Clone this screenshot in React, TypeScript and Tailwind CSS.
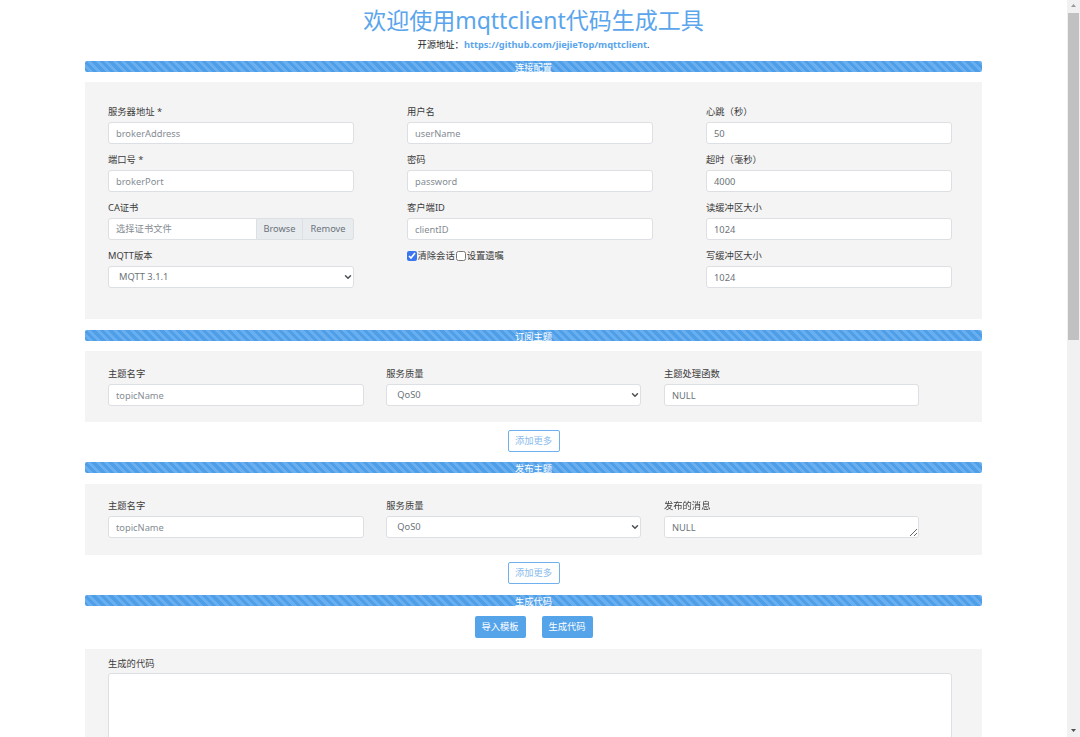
import React from 'react';
import { ChevronDown } from 'lucide-react';

const inputClass =
  'block w-full h-[22px] rounded-[3px] border border-[#dcdfe3] bg-white px-[7px] text-[9.3px] text-[#6b737a] placeholder:text-[#858c93] outline-none';
const labelClass = 'block h-[18px] text-[9.3px] leading-[15px] text-[#3c3c3c]';

function Field({ label, placeholder, value }: { label: string; placeholder?: string; value?: string }) {
  return (
    <div className="h-[48px]">
      <label className={labelClass}>{label}</label>
      <input className={inputClass} placeholder={placeholder} defaultValue={value} />
    </div>
  );
}

function QosSelect({ label, value }: { label: string; value: string }) {
  return (
    <div className="h-[48px]">
      <label className={labelClass}>{label}</label>
      <div className="relative">
        <select
          defaultValue={value}
          className="block w-full h-[22px] appearance-none rounded-[3px] border border-[#dcdfe3] bg-white pl-[10px] text-[9.3px] text-[#6b737a] outline-none"
        >
          <option>{value}</option>
        </select>
        <ChevronDown size={10} strokeWidth={3.5} className="pointer-events-none absolute right-[1px] top-[6px] text-[#4a4f55]" />
      </div>
    </div>
  );
}

function SectionBar({ title, className }: { title: string; className: string }) {
  return (
    <div
      className={`h-[11px] rounded-[2px] bg-[repeating-linear-gradient(45deg,#4f9fe8_0,#4f9fe8_3px,#69aeee_3px,#69aeee_6px)] text-center text-[9.3px] leading-[13px] text-white ${className}`}
    >
      {title}
    </div>
  );
}

function AddMore() {
  return (
    <div className="mt-[8px] flex justify-center">
      <button className="h-[22px] w-[52px] rounded-[2px] border border-[#6fb1ee] bg-white text-[9.3px] text-[#8dbcec]">
        添加更多
      </button>
    </div>
  );
}

function TopicPanel({ lastLabel, textarea, className }: { lastLabel: string; textarea?: boolean; className: string }) {
  return (
    <div className={`h-[71px] bg-[#f4f4f4] pl-[23px] ${className}`}>
      <div className="grid grid-cols-[255.6px_255px_255px] gap-x-[22.7px]">
        <Field label="主题名字" placeholder="topicName" />
        <QosSelect label="服务质量" value="QoS0" />
        {textarea ? (
          <div className="h-[48px]">
            <label className={labelClass}>{lastLabel}</label>
            <textarea
              className="block w-full h-[22px] rounded-[3px] border border-[#dcdfe3] bg-white px-[7px] py-[4px] text-[9.3px] leading-[14px] text-[#6b737a] outline-none"
              defaultValue="NULL"
            />
          </div>
        ) : (
          <Field label={lastLabel} value="NULL" />
        )}
      </div>
    </div>
  );
}

export default function App() {
  return (
    <div className="flex h-screen overflow-hidden bg-white font-['Noto_Sans','Noto_Sans_CJK_SC',sans-serif]">
      <main className="flex-1 overflow-hidden">
        <div className="h-[61px] text-center">
          <h1 className="pt-[3px] text-[23px] leading-[35px] text-[#5aa5ec]">欢迎使用mqttclient代码生成工具</h1>
          <p className="pt-[1px] text-[9.3px] leading-[12px] text-[#222]">
            开源地址：
            <a className="font-bold text-[#5aa5ec]">https://github.com/jiejieTop/mqttclient</a>.
          </p>
        </div>

        <div className="mx-auto w-[897px]">
          <SectionBar title="连接配置" className="" />
          <div className="mt-[10px] h-[237px] bg-[#f4f4f4] pl-[23px] pt-[22px]">
            <div className="grid grid-cols-[246px_246px_246px] gap-x-[53px]">
              <Field label="服务器地址 *" placeholder="brokerAddress" />
              <Field label="用户名" placeholder="userName" />
              <Field label="心跳（秒）" value="50" />

              <Field label="端口号 *" placeholder="brokerPort" />
              <Field label="密码" placeholder="password" />
              <Field label="超时（毫秒）" value="4000" />

              <div className="h-[48px]">
                <label className={labelClass}>CA证书</label>
                <div className="flex h-[22px] text-[9.3px]">
                  <div className="flex flex-1 items-center rounded-l-[3px] border border-[#dcdfe3] bg-white px-[7px] text-[#858c93]">
                    选择证书文件
                  </div>
                  <button className="w-[46px] border border-l-0 border-[#dcdfe3] bg-[#e9ecef] text-[#6b737a]">Browse</button>
                  <button className="w-[51px] rounded-r-[3px] border border-l-0 border-[#dcdfe3] bg-[#e9ecef] text-[#6b737a]">Remove</button>
                </div>
              </div>
              <Field label="客户端ID" placeholder="clientID" />
              <Field label="读缓冲区大小" value="1024" />

              <QosSelect label="MQTT版本" value="MQTT 3.1.1" />
              <div className="flex h-[15px] items-center text-[9.3px] text-[#3c3c3c]">
                <input type="checkbox" defaultChecked className="m-0 h-[10px] w-[10px] accent-[#3b76f0]" />
                <span className="ml-[0.5px]">清除会话</span>
                <input type="checkbox" className="m-0 ml-[1.5px] h-[10px] w-[10px]" />
                <span className="ml-[0.5px]">设置遗嘱</span>
              </div>
              <Field label="写缓冲区大小" value="1024" />
            </div>
          </div>

          <SectionBar title="订阅主题" className="mt-[11px]" />
          <TopicPanel lastLabel="主题处理函数" className="mt-[10px] pt-[15px]" />
          <AddMore />

          <SectionBar title="发布主题" className="mt-[10px]" />
          <TopicPanel lastLabel="发布的消息" textarea className="mt-[11px] pt-[14px]" />
          <div className="-mt-px">
            <AddMore />
          </div>

          <SectionBar title="生成代码" className="mt-[11px]" />
          <div className="mt-[10px] flex justify-center gap-[16px]">
            <button className="h-[22px] w-[51px] rounded-[2px] bg-[#55a4ea] text-[9.3px] text-white">导入模板</button>
            <button className="h-[22px] w-[51px] rounded-[2px] bg-[#55a4ea] text-[9.3px] text-white">生成代码</button>
          </div>
          <div className="mt-[11px] h-[200px] bg-[#f4f4f4] pl-[23px] pr-[30px] pt-[7px]">
            <label className="block h-[17px] text-[9.3px] leading-[15px] text-[#3c3c3c]">生成的代码</label>
            <textarea className="block h-[170px] w-full rounded-[3px] border border-[#dcdfe3] bg-white outline-none" />
          </div>
        </div>
      </main>

      <aside className="flex w-[13px] flex-col items-center bg-[#f1f1f1]">
        <svg width="7" height="13" viewBox="0 0 7 13" className="shrink-0">
          <path d="M3.5 4 L6 7 H1 Z" fill="#9a9a9a" />
        </svg>
        <div className="h-[327px] w-[11px] bg-[#c1c1c1]" />
        <div className="flex-1" />
        <svg width="7" height="13" viewBox="0 0 7 13" className="shrink-0">
          <path d="M1 5 H6 L3.5 8 Z" fill="#505050" />
        </svg>
      </aside>
    </div>
  );
}
